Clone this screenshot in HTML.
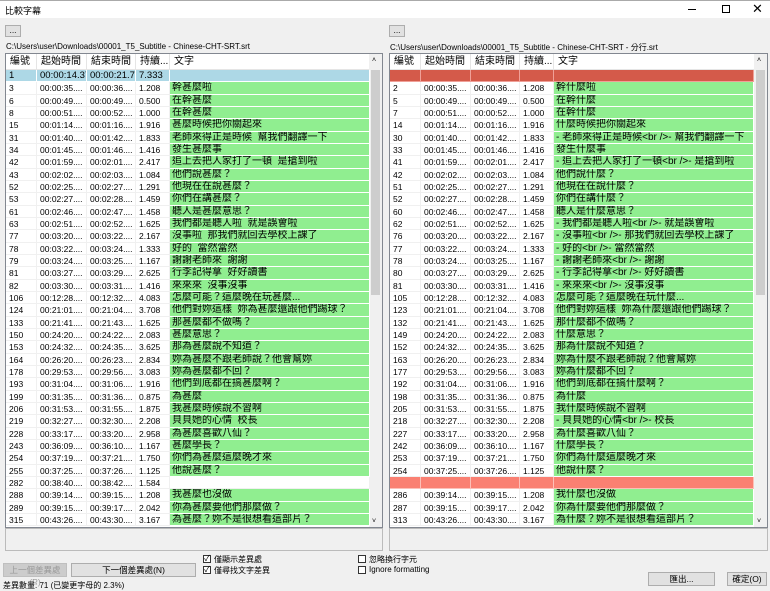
<!DOCTYPE html>
<html><head><meta charset="utf-8">
<style>
*{margin:0;padding:0;box-sizing:border-box}
body{width:770px;height:590px;background:#f0f0f0;font-family:"Liberation Sans","Noto Sans CJK TC",sans-serif;font-size:8.5px;color:#000;position:relative;overflow:hidden}
.abs{position:absolute}
.title{left:0;top:0;width:770px;height:18px;background:#fff;border-top:1px solid #aaa}
.title span{position:absolute;left:5px;top:3px;font-size:9px}
.btn{position:absolute;background:#e1e1e1;border:1px solid #adadad;font-size:8.5px;text-align:center}
.path{position:absolute;font-size:8px;top:42px}
.list{position:absolute;top:53px;height:475px;background:#fff;border:1px solid #828790;overflow:hidden}
.hdr{position:absolute;top:0;height:16px;left:0;right:13px;border-bottom:1px solid #e5e5e5}
.hdr div{position:absolute;top:0;height:16px;line-height:16px;padding-left:4px;font-size:10px;border-right:1px solid #e5e5e5}
.row{position:absolute;left:0;right:13px;height:12.33px}
.row div{position:absolute;top:0;height:12.33px;line-height:12px;padding-left:3px;white-space:nowrap;overflow:hidden;border-right:1px solid #f0f0f0;border-bottom:1px solid #f0f0f0}
.row div.t{background:#90ee90;border-color:#fff;font-size:10px;padding-left:2px}
.row.sel div{background:#add8e6;border-color:#fff;font-size:9.5px}
.row.r1 div{background:#d45a4a;border-color:#f0a098}
.row.r2 div{background:#fa8072;border-color:#fcc0b8}
.sb{position:absolute;right:0;top:0;width:13px;bottom:0;background:#f0f0f0}
.sb .th{position:absolute;left:2px;width:9px;top:16px;height:225px;background:#cdcdcd}
.box{position:absolute;top:528px;height:23px;border:1px solid #bbb;background:#f0f0f0}
.cb{position:absolute;width:8px;height:8px;border:1px solid #333;background:#fff;font-size:8px;line-height:6px;text-align:center}
.lab{position:absolute;font-size:8px}
</style></head><body>
<div class="abs title"><span>比較字幕</span>
<div class="abs" style="left:688px;top:8px;width:8px;height:1px;background:#000"></div>
<div class="abs" style="left:722px;top:4px;width:8px;height:8px;border:1px solid #000"></div>
<div class="abs" style="left:752px;top:0px;font-size:13px">✕</div>
</div>
<div class="btn" style="left:5px;top:25px;width:16px;height:12px;line-height:8px">...</div>
<div class="btn" style="left:389px;top:25px;width:16px;height:12px;line-height:8px">...</div>
<div class="path" style="left:6px">C:\Users\user\Downloads\00001_T5_Subtitle - Chinese-CHT-SRT.srt</div>
<div class="path" style="left:390px">C:\Users\user\Downloads\00001_T5_Subtitle - Chinese-CHT-SRT - 分行.srt</div>

<div class="list" style="left:5px;width:378px" id="L"><div class="hdr"><div style="left:0;width:31px">編號</div><div style="left:31px;width:50px">起始時間</div><div style="left:81px;width:49px">結束時間</div><div style="left:130px;width:34px">持續...</div><div style="left:164px;width:200px;border:0">文字</div></div><div class="sb"><div class="abs" style="left:3px;top:3px;font-size:7px">˄</div><div class="th"></div><div class="abs" style="left:3px;bottom:2px;font-size:7px">˅</div></div></div>
<div class="list" style="left:389px;width:379px" id="R"><div class="hdr"><div style="left:0;width:31px">編號</div><div style="left:31px;width:50px">起始時間</div><div style="left:81px;width:49px">結束時間</div><div style="left:130px;width:34px">持續...</div><div style="left:164px;width:200px;border:0">文字</div></div><div class="sb"><div class="abs" style="left:3px;top:3px;font-size:7px">˄</div><div class="th"></div><div class="abs" style="left:3px;bottom:2px;font-size:7px">˅</div></div></div>

<div class="box" style="left:5px;width:378px"></div>
<div class="box" style="left:389px;width:379px"></div>

<div class="btn" style="left:3px;top:563px;width:64px;height:14px;line-height:12px;color:#999;background:#ccc;border-color:#bfbfbf">上一個差異處(P)</div>
<div class="btn" style="left:71px;top:563px;width:125px;height:14px;line-height:12px">下一個差異處(N)</div>
<div class="cb" style="left:203px;top:555px">✓</div><div class="lab" style="left:214px;top:554px">僅顯示差異處</div>
<div class="cb" style="left:203px;top:566px">✓</div><div class="lab" style="left:214px;top:565px">僅尋找文字差異</div>
<div class="cb" style="left:358px;top:555px"></div><div class="lab" style="left:369px;top:554px">忽略換行字元</div>
<div class="cb" style="left:358px;top:566px"></div><div class="lab" style="left:369px;top:565px">Ignore formatting</div>
<div class="lab" style="left:3px;top:580px">差異數量: 71 (已變更字母的 2.3%)</div>
<div class="btn" style="left:648px;top:572px;width:67px;height:14px;line-height:12px">匯出...</div>
<div class="btn" style="left:727px;top:572px;width:40px;height:14px;line-height:12px">確定(O)</div>

<script>
const L=[["1","00:00:14.37","00:00:21.70","7.333","",1],
["3","00:00:35....","00:00:36....","1.208","幹甚麼啦"],["6","00:00:49....","00:00:49....","0.500","在幹甚麼"],["8","00:00:51....","00:00:52....","1.000","在幹甚麼"],["15","00:01:14....","00:01:16....","1.916","甚麼時候把你關起來"],["31","00:01:40....","00:01:42....","1.833","老師來得正是時候  幫我們翻譯一下"],["34","00:01:45....","00:01:46....","1.416","發生甚麼事"],["42","00:01:59....","00:02:01....","2.417","追上去把人家打了一頓  是搶到啦"],["43","00:02:02....","00:02:03....","1.084","他們說甚麼？"],["52","00:02:25....","00:02:27....","1.291","他現在在說甚麼？"],["53","00:02:27....","00:02:28....","1.459","你們在講甚麼？"],["61","00:02:46....","00:02:47....","1.458","聽人是甚麼意思？"],["63","00:02:51....","00:02:52....","1.625","我們都是聽人啦  就是誤會啦"],["77","00:03:20....","00:03:22....","2.167","沒事啦  那我們就回去學校上課了"],["78","00:03:22....","00:03:24....","1.333","好的  當然當然"],["79","00:03:24....","00:03:25....","1.167","謝謝老師來  謝謝"],["81","00:03:27....","00:03:29....","2.625","行李記得拿  好好讀書"],["82","00:03:30....","00:03:31....","1.416","來來來  沒事沒事"],["106","00:12:28....","00:12:32....","4.083","怎麼可能？這麼晚在玩甚麼..."],["124","00:21:01....","00:21:04....","3.708","他們對妳這樣  妳為甚麼還跟他們踢球？"],["133","00:21:41....","00:21:43....","1.625","那甚麼都不做嗎？"],["150","00:24:20....","00:24:22....","2.083","甚麼意思？"],["153","00:24:32....","00:24:35....","3.625","那為甚麼說不知道？"],["164","00:26:20....","00:26:23....","2.834","妳為甚麼不跟老師說？他會幫妳"],["178","00:29:53....","00:29:56....","3.083","妳為甚麼都不回？"],["193","00:31:04....","00:31:06....","1.916","他們到底都在搞甚麼啊？"],["199","00:31:35....","00:31:36....","0.875","為甚麼"],["206","00:31:53....","00:31:55....","1.875","我甚麼時候說不習啊"],["219","00:32:27....","00:32:30....","2.208","貝貝她的心情  校長"],["228","00:33:17....","00:33:20....","2.958","為甚麼喜歡八仙？"],["243","00:36:09....","00:36:10....","1.167","甚麼學長？"],["254","00:37:19....","00:37:21....","1.750","你們為甚麼這麼晚才來"],["255","00:37:25....","00:37:26....","1.125","他說甚麼？"],["282","00:38:40....","00:38:42....","1.584","",2],["288","00:39:14....","00:39:15....","1.208","我甚麼也沒做"],["289","00:39:15....","00:39:17....","2.042","你為甚麼要他們那麼做？"],["315","00:43:26....","00:43:30....","3.167","為甚麼？妳不是很想看這部片？"]];
const R=[["","","","","",3],
["2","00:00:35....","00:00:36....","1.208","幹什麼啦"],["5","00:00:49....","00:00:49....","0.500","在幹什麼"],["7","00:00:51....","00:00:52....","1.000","在幹什麼"],["14","00:01:14....","00:01:16....","1.916","什麼時候把你關起來"],["30","00:01:40....","00:01:42....","1.833","- 老師來得正是時候<br />- 幫我們翻譯一下"],["33","00:01:45....","00:01:46....","1.416","發生什麼事"],["41","00:01:59....","00:02:01....","2.417","- 追上去把人家打了一頓<br />- 是搶到啦"],["42","00:02:02....","00:02:03....","1.084","他們說什麼？"],["51","00:02:25....","00:02:27....","1.291","他現在在說什麼？"],["52","00:02:27....","00:02:28....","1.459","你們在講什麼？"],["60","00:02:46....","00:02:47....","1.458","聽人是什麼意思？"],["62","00:02:51....","00:02:52....","1.625","- 我們都是聽人啦<br />- 就是誤會啦"],["76","00:03:20....","00:03:22....","2.167","- 沒事啦<br />- 那我們就回去學校上課了"],["77","00:03:22....","00:03:24....","1.333","- 好的<br />- 當然當然"],["78","00:03:24....","00:03:25....","1.167","- 謝謝老師來<br />- 謝謝"],["80","00:03:27....","00:03:29....","2.625","- 行李記得拿<br />- 好好讀書"],["81","00:03:30....","00:03:31....","1.416","- 來來來<br />- 沒事沒事"],["105","00:12:28....","00:12:32....","4.083","怎麼可能？這麼晚在玩什麼..."],["123","00:21:01....","00:21:04....","3.708","他們對妳這樣  妳為什麼還跟他們踢球？"],["132","00:21:41....","00:21:43....","1.625","那什麼都不做嗎？"],["149","00:24:20....","00:24:22....","2.083","什麼意思？"],["152","00:24:32....","00:24:35....","3.625","那為什麼說不知道？"],["163","00:26:20....","00:26:23....","2.834","妳為什麼不跟老師說？他會幫妳"],["177","00:29:53....","00:29:56....","3.083","妳為什麼都不回？"],["192","00:31:04....","00:31:06....","1.916","他們到底都在搞什麼啊？"],["198","00:31:35....","00:31:36....","0.875","為什麼"],["205","00:31:53....","00:31:55....","1.875","我什麼時候說不習啊"],["218","00:32:27....","00:32:30....","2.208","- 貝貝她的心情<br />- 校長"],["227","00:33:17....","00:33:20....","2.958","為什麼喜歡八仙？"],["242","00:36:09....","00:36:10....","1.167","什麼學長？"],["253","00:37:19....","00:37:21....","1.750","你們為什麼這麼晚才來"],["254","00:37:25....","00:37:26....","1.125","他說什麼？"],["","","","","",4],["286","00:39:14....","00:39:15....","1.208","我什麼也沒做"],["287","00:39:15....","00:39:17....","2.042","你為什麼要他們那麼做？"],["313","00:43:26....","00:43:30....","3.167","為什麼？妳不是很想看這部片？"]];
const W=[[0,31],[31,50],[81,49],[130,34],[164,200]];
function esc(s){return s.replace(/&/g,"&amp;").replace(/</g,"&lt;").replace(/>/g,"&gt;").replace(/  /g,"&nbsp; ")}
function fill(id,data){const el=document.getElementById(id);let h="";data.forEach((r,i)=>{const f=r[5];let c="row"+(f==1?" sel":f==3?" r1":f==4?" r2":"");h+=`<div class="${c}" style="top:${16+i*12.33}px">`;for(let k=0;k<5;k++){let cls=(k==4&&!f)?' class="t"':'';h+=`<div${cls} style="left:${W[k][0]}px;width:${W[k][1]}px">${esc(r[k])}</div>`}h+="</div>"});el.insertAdjacentHTML("beforeend",h)}
fill("L",L);fill("R",R);
</script>
</body></html>
